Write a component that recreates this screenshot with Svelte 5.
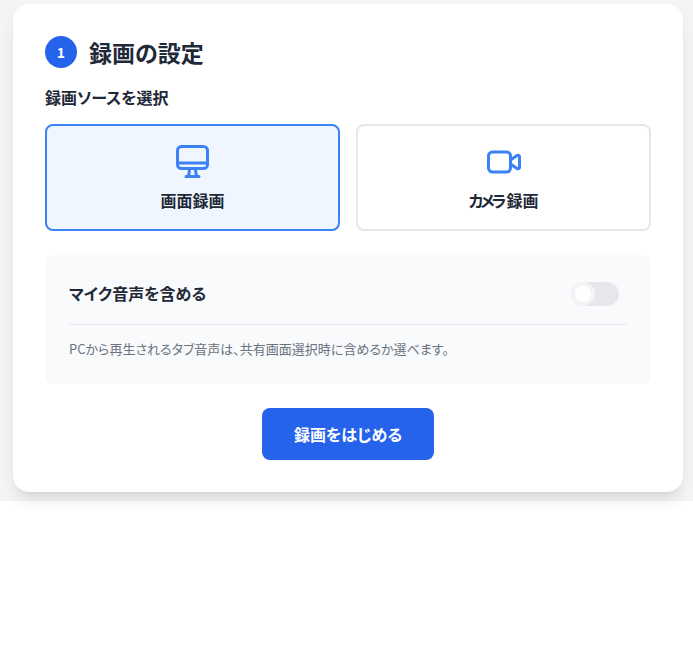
<script>
	let source = 'screen';
	let mic = false;
</script>

<div class="page">
	<section class="card">
		<header class="heading">
			<span class="step">1</span>
			<h2>録画の設定</h2>
		</header>

		<p class="label">録画ソースを選択</p>
		<div class="sources">
			<button class="source" class:active={source === 'screen'} onclick={() => (source = 'screen')}>
				<svg width="36" height="36" viewBox="0 0 36 36" fill="none" stroke="currentColor" stroke-width="3" stroke-linecap="round" stroke-linejoin="round">
					<rect x="2.500" y="2.500" width="30" height="22" rx="4" />
					<path d="M2.500 19h30" />
					<path d="M14.500 26l-1 6.500M20.500 26l1 6.500M11 32.500h13" />
				</svg>
				<span>画面録画</span>
			</button>
			<button class="source" class:active={source === 'camera'} onclick={() => (source = 'camera')}>
				<svg width="36" height="36" viewBox="0 0 36 36" fill="none" stroke="currentColor" stroke-width="3" stroke-linecap="round" stroke-linejoin="round">
					<rect x="2.500" y="8" width="22" height="20" rx="4" />
					<path d="M24.500 16l6.500-4.500c1-.7 2.500 0 2.500 1.300v10.400c0 1.300-1.500 2-2.500 1.300L24.500 20" />
				</svg>
				<span><span class="kana">カメラ</span>録画</span>
			</button>
		</div>

		<div class="panel">
			<div class="mic-row">
				<span class="mic-label">マイク音声を含める</span>
				<button class="toggle" class:on={mic} aria-label="マイク音声" onclick={() => (mic = !mic)}>
					<span class="knob"></span>
				</button>
			</div>
			<p class="note">PCから再生されるタブ音声は、共有画面選択時に含めるか選べます。</p>
		</div>

		<div class="actions">
			<button class="start">録画をはじめる</button>
		</div>
	</section>
</div>
<div class="rest"></div>

<style>
	:global(body) {
		margin: 0;
		background: #fff;
		font-family: "Noto Sans CJK JP", "Noto Sans", sans-serif;
		font-feature-settings: "palt";
		color: #1f2937;
	}

	.page {
		background: #f3f4f6;
		padding: 4px 10px 9px 13px;
	}

	.card {
		background: #fff;
		border-radius: 16px;
		padding: 32px;
		box-shadow: 0 10px 15px -3px rgba(0, 0, 0, 0.1), 0 4px 6px -4px rgba(0, 0, 0, 0.1);
	}

	.heading {
		display: flex;
		align-items: center;
		gap: 12px;
		margin-bottom: 19px;
	}

	.step {
		width: 32px;
		height: 32px;
		border-radius: 50%;
		background: #2563eb;
		color: #fff;
		font-size: 14px;
		font-weight: 700;
		display: flex;
		align-items: center;
		justify-content: center;
	}

	h2 {
		margin: 0;
		font-size: 23px;
		line-height: 32px;
		font-weight: 700;
	}

	.label {
		margin: 0 0 17px;
		font-size: 16px;
		line-height: 20px;
		font-weight: 700;
	}

	.sources {
		display: grid;
		grid-template-columns: 1fr 1fr;
		gap: 16px;
	}

	.source {
		height: 107px;
		box-sizing: border-box;
		background: #fff;
		border: 2px solid #e5e7eb;
		border-radius: 8px;
		display: flex;
		flex-direction: column;
		align-items: center;
		padding: 18px 0 0;
		font-family: inherit;
		font-feature-settings: inherit;
		font-size: 16px;
		font-weight: 700;
		color: #1f2937;
		cursor: pointer;
	}

	.source svg {
		color: #3b82f6;
	}

	.source > span {
		margin-top: 10px;
		line-height: 20px;
	}

	.kana {
		letter-spacing: -0.18em;
		margin-right: 0.18em;
	}

	.source.active {
		background: #eff6ff;
		border-color: #3b82f6;
	}

	.panel {
		margin-top: 24px;
		background: #f9fafb;
		border-radius: 8px;
		padding: 24px;
		height: 129px;
		box-sizing: border-box;
	}

	.mic-row {
		display: flex;
		align-items: center;
		justify-content: space-between;
		height: 29px;
		padding: 0 8px 16px 0;
		border-bottom: 1px solid #e5e7eb;
		margin-bottom: 14px;
	}

	.mic-label {
		font-size: 16px;
		font-weight: 700;
		padding-bottom: 2px;
	}

	.toggle {
		width: 48px;
		height: 24px;
		padding: 0;
		border: 0;
		border-radius: 12px;
		background: #e5e7eb;
		position: relative;
		cursor: pointer;
	}

	.knob {
		position: absolute;
		left: 0;
		top: 0;
		width: 24px;
		height: 24px;
		border-radius: 50%;
		background: #fff;
		border: 4px solid #f3f4f6;
		box-sizing: border-box;
	}

	.toggle.on {
		background: #2563eb;
	}

	.toggle.on .knob {
		left: 24px;
	}

	.note {
		margin: 0;
		font-size: 13px;
		line-height: 20px;
		color: #6b7280;
	}

	.actions {
		display: flex;
		justify-content: center;
		margin-top: 24px;
	}

	.start {
		width: 172px;
		height: 52px;
		border: 0;
		border-radius: 8px;
		background: #2563eb;
		color: #fff;
		font-family: inherit;
		font-feature-settings: inherit;
		font-size: 16px;
		font-weight: 700;
		cursor: pointer;
	}

	.rest {
		height: 147px;
	}
</style>
